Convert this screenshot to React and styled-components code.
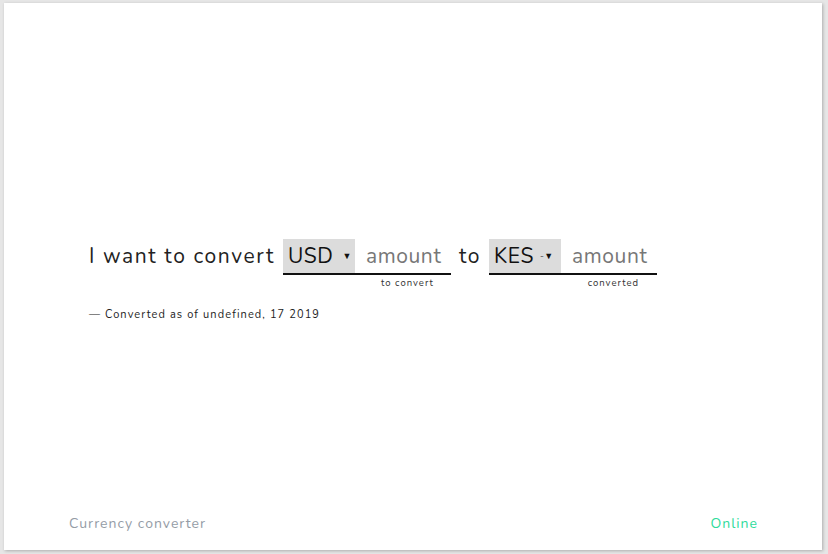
import React from "react";
import styled, { createGlobalStyle } from "styled-components";

const Global = createGlobalStyle`
  html, body { margin: 0; padding: 0; }
  body {
    background: #e6e6e6;
    font-family: "Nunito", Lato, "Open Sans", sans-serif;
  }
`;

const Page = styled.div`
  padding: 3px 6px 4px 4px;
  box-sizing: border-box;
  width: 828px;
  height: 554px;
`;

const Card = styled.div`
  background: #fff;
  height: 547px;
  box-shadow: 1px 1px 3px rgba(0,0,0,0.25);
  display: flex;
  flex-direction: column;
  box-sizing: border-box;
`;

const Main = styled.main`
  flex: 1;
  display: flex;
  flex-direction: column;
  justify-content: center;
  padding: 0 0 0 85px;
  margin-top: 44px;
`;

const Sentence = styled.div`
  display: flex;
  align-items: flex-start;
  font-size: 21px;
  color: #222;
  letter-spacing: 1.6px;
`;

const Word = styled.span`
  line-height: 34px;
  margin: 0 ${p => p.$right}px 0 ${p => p.$left || 0}px;
`;

const Field = styled.div`
  display: flex;
  flex-direction: column;
`;

const FieldRow = styled.div`
  display: flex;
  border-bottom: 2px solid #111;
  height: 34px;
`;

const Select = styled.div`
  background: #dcdcdc;
  width: ${p => p.$w}px;
  box-sizing: border-box;
  padding-left: 5px;
  display: flex;
  align-items: center;
  font-size: 21px;
  color: #111;
  letter-spacing: 0.6px;
`;

const Arrow = styled.span`
  font-size: 9px;
  margin-left: ${p => p.$ml}px;
`;

const Amount = styled.div`
  width: ${p => p.$w}px;
  box-sizing: border-box;
  padding-left: 11px;
  display: flex;
  align-items: center;
  color: #777;
  font-size: 21px;
  letter-spacing: 0.6px;
`;

const Hint = styled.div`
  font-size: 9.5px;
  letter-spacing: 1px;
  color: #333;
  text-align: right;
  padding-right: ${p => p.$pr}px;
  margin-top: 1px;
`;

const Note = styled.div`
  margin-top: 18px;
  margin-left: 0;
  font-size: 11px;
  letter-spacing: 1.1px;
  color: #222;
`;

const Footer = styled.footer`
  display: flex;
  justify-content: space-between;
  padding: 0 64px 17px 65px;
  font-size: 14px;
  letter-spacing: 1px;
`;

const Brand = styled.span`
  color: #949ca6;
`;

const Status = styled.span`
  color: #2edb9b;
`;

export default function App() {
  return (
    <Page>
      <Global />
      <Card>
        <Main>
          <Sentence>
            <Word $right={8}>I want to convert</Word>
            <Field>
              <FieldRow>
                <Select $w={72}>USD<Arrow $ml={9}>▼</Arrow></Select>
                <Amount $w={96}>amount</Amount>
              </FieldRow>
              <Hint $pr={17}>to convert</Hint>
            </Field>
            <Word $left={8} $right={8}>to</Word>
            <Field>
              <FieldRow>
                <Select $w={72}>KES<Arrow $ml={6}>-▼</Arrow></Select>
                <Amount $w={96}>amount</Amount>
              </FieldRow>
              <Hint $pr={18}>converted</Hint>
            </Field>
          </Sentence>
          <Note>— Converted as of undefined, 17 2019</Note>
        </Main>
        <Footer>
          <Brand>Currency converter</Brand>
          <Status>Online</Status>
        </Footer>
      </Card>
    </Page>
  );
}
